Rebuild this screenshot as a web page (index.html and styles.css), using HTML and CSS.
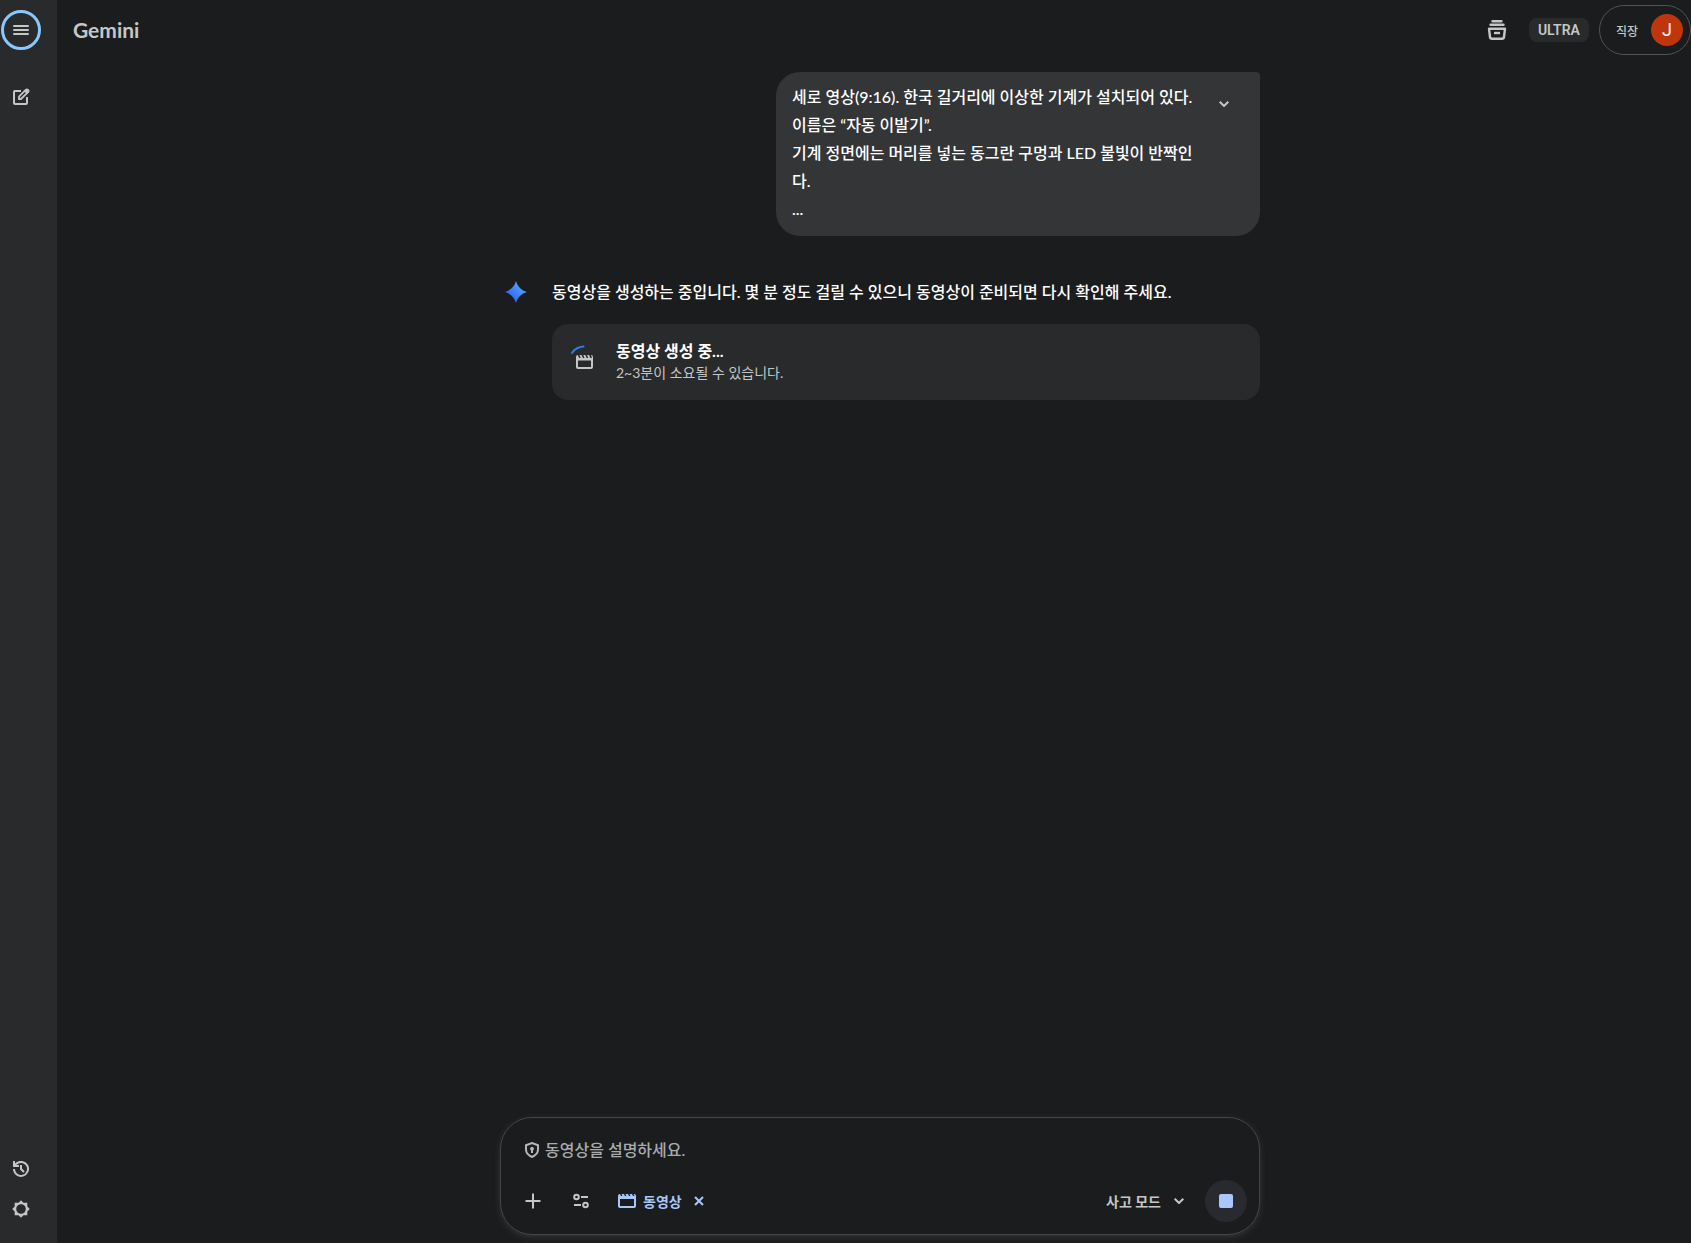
FILE: index.html
```html
<!DOCTYPE html>
<html lang="ko">
<head>
    <meta charset="UTF-8">
    <meta name="viewport" content="width=device-width, initial-scale=1.0">
    <title>Gemini</title>
    <link rel="stylesheet" href="styles.css">
</head>
<body>
    <nav class="sidebar">
        <div class="sidebar-group">
            <button class="menu-button" aria-label="기본 메뉴">
                <svg width="16" height="12" viewBox="0 0 16 12"><path d="M1 2h14M1 6h14M1 10h14" stroke="currentColor" stroke-width="2" stroke-linecap="round"/></svg>
            </button>
            <button class="side-button" aria-label="새 채팅">
                <svg width="18" height="18" viewBox="0 0 18 18" fill="none" stroke="currentColor" stroke-width="2"><path d="M9 3H3q-1 0-1 1v11q0 1 1 1h11q1 0 1-1V9"/><path d="M7 8.700 L14 1.700 Q15 .9 16 1.900 Q17 2.900 16.200 3.900 L9 11H7z" stroke-width="1.800"/><path d="M13 2l3 3" stroke-width="3"/></svg>
            </button>
        </div>
        <div class="sidebar-group">
            <button class="side-button" aria-label="활동">
                <svg width="16" height="16" viewBox="0 0 16 16" fill="none" stroke="currentColor" stroke-width="2"><path d="M1 8a7 7 0 1 0 2-5L1.500 4.500M1 0v5h5"/><path d="M8 4v4l3 3"/></svg>
            </button>
            <button class="side-button" aria-label="설정">
                <svg width="18" height="18" viewBox="0 0 18 18"><path fill="currentColor" fill-rule="evenodd" d="M9 .2l2.400 2.500H15.300v3.900L17.800 9 15.300 11.400V15.300h-3.900L9 17.800 6.600 15.300H2.700v-3.900L.2 9 2.700 6.600V2.700h3.900zM9 4.200a4.800 4.800 0 1 0 0 9.600A4.800 4.800 0 1 0 9 4.200z"/></svg>
            </button>
        </div>
    </nav>

    <main class="main">
        <header class="header">
            <a class="brand" href="#">Gemini</a>
            <div class="header-actions">
                <button class="icon-button" aria-label="내 콘텐츠">
                    <svg width="20" height="20" viewBox="0 0 20 20" fill="none" stroke="currentColor"><path d="M5.500 1.200h9M3.500 4.800h13" stroke-width="2.400" stroke-linecap="round"/><path d="M2 8.700h16l-1 8.300q-.2 1.700-2 1.700H5q-1.800 0-2-1.700z" stroke-width="2.400" stroke-linejoin="round"/><path d="M7 13h6" stroke-width="2.400"/></svg>
                </button>
                <span class="plan">ULTRA</span>
                <button class="account" aria-label="직장 계정">
                    <span>직장</span>
                    <span class="avatar">J</span>
                </button>
            </div>
        </header>

        <section class="conversation">
            <div class="prompt">
                <p>세로 영상(9:16). 한국 길거리에 이상한 기계가 설치되어 있다.<br>이름은 “자동 이발기”.<br>기계 정면에는 머리를 넣는 동그란 구멍과 LED 불빛이 반짝인다.<br>...</p>
                <button class="expand" aria-label="펼치기">
                    <svg width="10" height="6" viewBox="0 0 10 6"><path d="M.7.7L5 5 9.300.7" fill="none" stroke="currentColor" stroke-width="2"/></svg>
                </button>
            </div>

            <div class="response">
                <svg class="spark" width="22" height="22" viewBox="0 0 22 22">
                    <defs>
                        <linearGradient id="spark-fill" x1="0" y1="1" x2="1" y2="0">
                            <stop offset="0.200" stop-color="#2f62f0"/>
                            <stop offset="0.800" stop-color="#55a4fb"/>
                        </linearGradient>
                    </defs>
                    <path fill="url(#spark-fill)" d="M11 0C12.500 5.500 16.500 9.500 22 11 16.500 12.500 12.500 16.500 11 22 9.500 16.500 5.500 12.500 0 11 5.500 9.500 9.500 5.500 11 0z"/>
                </svg>
                <div class="answer">
                    <p>동영상을 생성하는 중입니다. 몇 분 정도 걸릴 수 있으니 동영상이 준비되면 다시 확인해 주세요.</p>
                    <div class="video-card">
                        <svg width="24" height="24" viewBox="0 0 24 24">
                            <path d="M2 8Q6 2 13.500 1.500" fill="none" stroke="#2f7df6" stroke-width="2" stroke-linecap="round"/>
                            <path fill="#c4c7c5" fill-rule="evenodd" d="M6 12q0-2 1.700-2l1.500 3h1.500L9.500 10h2l1.500 3h1.500L13.300 10h2l1.500 3h1.500L17 10h2l1.500 3H22l-1-3q2 0 2 2v10q0 2-2 2H8q-2 0-2-2zM8 15.500V22h13v-6.500z"/>
                        </svg>
                        <div>
                            <strong>동영상 생성 중...</strong>
                            <span>2~3분이 소요될 수 있습니다.</span>
                        </div>
                    </div>
                </div>
            </div>
        </section>

        <form class="composer">
            <div class="composer-input">
                <svg width="14" height="16" viewBox="0 0 14 16"><path d="M7 1l6 2.200V7.500Q13 12.500 7 15 1 12.500 1 7.500V3.200z" fill="none" stroke="currentColor" stroke-width="2"/><path d="M7 4.700a2 2 0 0 0-1 3.700V11h2V8.400a2 2 0 0 0-1-3.700z" fill="currentColor"/></svg>
                <input type="text" placeholder="동영상을 설명하세요." aria-label="동영상을 설명하세요.">
            </div>
            <div class="composer-tools">
                <button type="button" class="tool" aria-label="파일 추가">
                    <svg width="16" height="16" viewBox="0 0 16 16"><path d="M8 .5v15M.5 8h15" stroke="currentColor" stroke-width="2"/></svg>
                </button>
                <button type="button" class="tool" aria-label="도구">
                    <svg width="16" height="16" viewBox="0 0 16 16" fill="none" stroke="currentColor" stroke-width="2"><circle cx="3.500" cy="4" r="2.300"/><path d="M8 4h7M1 12h7"/><circle cx="12.500" cy="12" r="2.300"/></svg>
                </button>
                <button type="button" class="tool-chip">
                    <svg width="18" height="14" viewBox="0 0 18 14"><path d="M1 3v9q0 1 1 1h14q1 0 1-1V3z" fill="none" stroke="currentColor" stroke-width="2"/><path d="M0 2Q0 0 2 0l1.500 3H5L3.500 0H6l1.500 3H9L7.500 0H10l1.500 3H13L11.500 0H14l1.500 3H17L15.500 0H16q2 0 2 2v3H0z" fill="currentColor"/></svg>
                    <span>동영상</span>
                    <svg width="10" height="10" viewBox="0 0 10 10"><path d="M1 1l8 8M9 1L1 9" stroke="currentColor" stroke-width="2"/></svg>
                </button>
                <button type="button" class="mode">
                    <span>사고 모드</span>
                    <svg width="10" height="6" viewBox="0 0 10 6"><path d="M.7.7L5 5 9.300.7" fill="none" stroke="currentColor" stroke-width="2"/></svg>
                </button>
                <button type="button" class="stop" aria-label="대답 생성 중지"><span></span></button>
            </div>
        </form>
    </main>
</body>
</html>
```
FILE: styles.css
```css
* {
    box-sizing: border-box;
}
body {
    margin: 0;
    display: flex;
    min-height: 100vh;
    background-color: #1b1c1d;
    color: #ffffff;
    font-family: Lato, "Noto Sans CJK KR", sans-serif;
    font-size: 16px;
    font-weight: 500;
}
p {
    margin: 0;
}
button {
    display: flex;
    align-items: center;
    justify-content: center;
    padding: 0;
    border: none;
    background: none;
    color: #c4c7c5;
    font-family: inherit;
    cursor: pointer;
}
svg {
    flex-shrink: 0;
}
.sidebar {
    display: flex;
    flex-direction: column;
    justify-content: space-between;
    width: 57px;
    padding: 10px 0 14px 1px;
    background-color: #282a2c;
}
.menu-button {
    width: 40px;
    height: 40px;
    margin-bottom: 27px;
    border: 3px solid #8ac7fc;
    border-radius: 50%;
}
.side-button {
    width: 40px;
    height: 40px;
}
.main {
    flex: 1;
    min-width: 0;
    display: flex;
    flex-direction: column;
    padding-bottom: 8px;
}
.header {
    display: flex;
    align-items: center;
    justify-content: space-between;
    height: 60px;
    padding-left: 16px;
}
.brand {
    padding-bottom: 2px;
    color: #c4c7c5;
    font-size: 21px;
    font-weight: 700;
    text-decoration: none;
}
.header-actions {
    display: flex;
    align-items: center;
    gap: 10px;
}
.icon-button {
    width: 40px;
    height: 40px;
    margin-right: 2px;
}
.plan {
    width: 60px;
    border-radius: 8px;
    background-color: #282a2c;
    color: #c4c7c5;
    font-family: Roboto, sans-serif;
    font-size: 14px;
    font-weight: 600;
    line-height: 24px;
    text-align: center;
}
.account {
    gap: 13px;
    height: 50px;
    padding: 0 7px 0 16px;
    border: 1px solid #515453;
    border-radius: 25px;
    font-size: 12px;
    font-weight: 500;
}
.avatar {
    width: 32px;
    border-radius: 50%;
    background-color: #bf360c;
    color: #ffffff;
    font-family: Roboto, sans-serif;
    font-size: 18px;
    font-weight: 400;
    line-height: 32px;
}
.conversation {
    flex: 1;
    display: flex;
    flex-direction: column;
    gap: 40px;
    width: 100%;
    max-width: 772px;
    margin: 0 auto;
    padding: 12px 0 24px 12px;
}
.prompt {
    align-self: flex-end;
    display: flex;
    align-items: flex-start;
    justify-content: space-between;
    width: 484px;
    max-width: 100%;
    padding: 11px 16px 13px;
    border-radius: 24px 4px 24px 24px;
    background-color: #333537;
    line-height: 28px;
}
.prompt p {
    width: 408px;
    word-break: break-all;
}
.expand {
    width: 40px;
    height: 42px;
}
.response {
    display: flex;
    gap: 25px;
    padding-left: 5px;
}
.spark {
    margin-top: 5px;
}
.answer {
    flex: 1;
    line-height: 28px;
    padding-top: 2px;
}
.video-card {
    display: flex;
    gap: 22px;
    margin-top: 18px;
    padding: 16px 18px;
    border-radius: 16px;
    background-color: #282a2c;
}
.video-card svg {
    margin-top: 5px;
}
.video-card strong,
.video-card span {
    display: block;
    line-height: 22px;
}
.video-card span {
    color: #c4c7c5;
    font-size: 14px;
    font-weight: 400;
}
.composer {
    width: calc(100% - 12px);
    max-width: 760px;
    margin: 0 auto;
    padding: 20px 12px 12px;
    border: 1px solid #444746;
    border-radius: 32px;
    box-shadow: 0 2px 8px -2px rgba(154, 160, 166, 0.3);
    position: relative;
    left: 6px;
}
.composer-input {
    display: flex;
    align-items: center;
    gap: 6px;
    height: 24px;
    padding-left: 12px;
    color: #b4b7ba;
}
.composer-input input {
    flex: 1;
    min-width: 0;
    padding: 0;
    border: none;
    outline: none;
    background: none;
    color: #ffffff;
    font-family: inherit;
    font-size: 16px;
    font-weight: inherit;
    line-height: 24px;
}
.composer-input input::placeholder {
    color: #a9acaf;
    opacity: 1;
}
.composer-tools {
    display: flex;
    align-items: center;
    gap: 8px;
    margin-top: 18px;
}
.tool {
    width: 40px;
    height: 40px;
}
.tool-chip {
    gap: 7px;
    height: 40px;
    padding: 0 9px;
    color: #a8c7fa;
    font-size: 14px;
    font-weight: 700;
}
.tool-chip span {
    margin-right: 5px;
}
.mode {
    gap: 13px;
    height: 40px;
    margin-left: auto;
    padding: 0 13px;
    font-size: 14px;
    font-weight: 700;
}
.stop {
    width: 42px;
    height: 42px;
    border-radius: 50%;
    background-color: #282a2f;
}
.stop span {
    width: 14px;
    height: 14px;
    border-radius: 2px;
    background-color: #a8c7fa;
}
```
